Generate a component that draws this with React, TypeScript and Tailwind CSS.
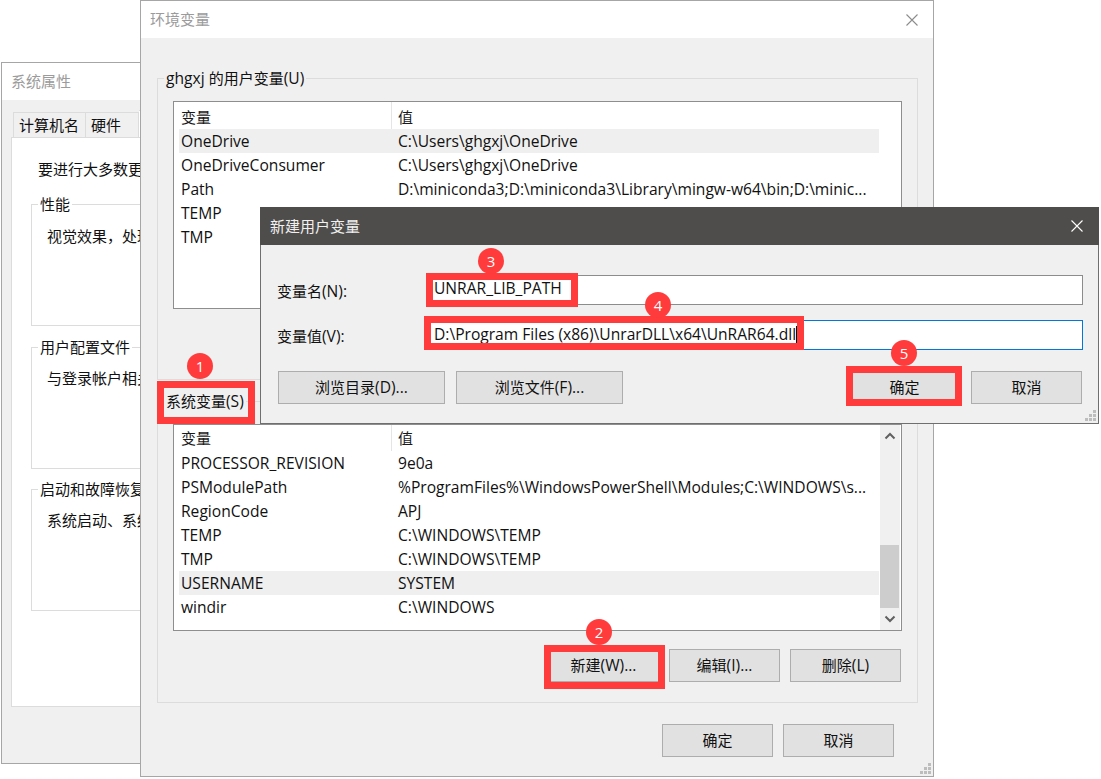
const fontStack = '"Open Sans", "Noto Sans CJK SC", sans-serif';

const userVars = [
  ['OneDrive', 'C:\\Users\\ghgxj\\OneDrive'],
  ['OneDriveConsumer', 'C:\\Users\\ghgxj\\OneDrive'],
  ['Path', 'D:\\miniconda3;D:\\miniconda3\\Library\\mingw-w64\\bin;D:\\minic...'],
  ['TEMP', ''],
  ['TMP', ''],
];

const systemVars = [
  ['PROCESSOR_REVISION', '9e0a'],
  ['PSModulePath', '%ProgramFiles%\\WindowsPowerShell\\Modules;C:\\WINDOWS\\s...'],
  ['RegionCode', 'APJ'],
  ['TEMP', 'C:\\WINDOWS\\TEMP'],
  ['TMP', 'C:\\WINDOWS\\TEMP'],
  ['USERNAME', 'SYSTEM'],
  ['windir', 'C:\\WINDOWS'],
];

// latin runs sit a bit wider than the CJK ones in the screenshot
function Mix({ text }: { text: string }) {
  const parts = text.split(/([\u4e00-\u9fff，、]+)/).filter(Boolean);
  return (
    <>
      {parts.map((p, i) =>
        /[\u4e00-\u9fff，、]/.test(p) ? <span key={i}>{p}</span> : <span key={i} className="text-[15.6px]">{p}</span>
      )}
    </>
  );
}

function WinButton({ label, className }: { label: string; className: string }) {
  return (
    <div className={`flex h-[33px] items-center justify-center border border-[#adadad] bg-[#e1e1e1] text-[15px] text-[#111] ${className}`}>
      <Mix text={label} />
    </div>
  );
}

function Grip() {
  return (
    <svg className="absolute bottom-[1px] right-[1px]" width="12" height="12" viewBox="0 0 12 12" fill="#bdbdbd">
      <rect x="8" y="0" width="3" height="3" />
      <rect x="4" y="4" width="3" height="3" />
      <rect x="8" y="4" width="3" height="3" />
      <rect x="0" y="8" width="3" height="3" />
      <rect x="4" y="8" width="3" height="3" />
      <rect x="8" y="8" width="3" height="3" />
    </svg>
  );
}

function CloseIcon({ stroke }: { stroke: string }) {
  return (
    <svg width="12" height="12" viewBox="0 0 12 12" fill="none" stroke={stroke} strokeWidth="1.1">
      <path d="M0.5 0.5L11.5 11.5M11.5 0.5L0.5 11.5" />
    </svg>
  );
}

function VarList({ rows, hoverRow, scroll, headClass, headText, className }: { rows: string[][]; hoverRow: number; scroll?: boolean; headClass: string; headText: string; className: string }) {
  return (
    <div className={`relative w-[729px] border border-[#8e8e8e] bg-white pl-[5px] ${className}`}>
      <div className={`flex items-center text-[15px] text-[#1a1a1a] ${headClass}`}>
        <div className="flex h-full w-[213px] items-center border-r border-[#e5e5e5] pl-[2px]">
          <span className={headText}>变量</span>
        </div>
        <div className={`pl-[6px] ${headText}`}>值</div>
      </div>
      {rows.map((r, i) => (
        <div key={r[0]} className={`flex h-[24px] w-[700px] items-center pt-[2px] text-[15.6px] text-[#111] ${i === hoverRow ? 'bg-[#efefef]' : ''}`}>
          <div className="w-[219px] pl-[2px]">{r[0]}</div>
          <div className="whitespace-nowrap">{r[1]}</div>
        </div>
      ))}
      {scroll && (
        <div className="absolute bottom-0 right-[1px] top-0 flex w-[20px] flex-col bg-[#f0f0f0]">
          <div className="flex h-[120px] justify-center pt-[7px]">
            <svg width="12" height="8" viewBox="0 0 12 8" fill="none" stroke="#606060" strokeWidth="2">
              <path d="M1.5 6.5L6 2L10.5 6.5" />
            </svg>
          </div>
          <div className="h-[63px] w-[19px] bg-[#cdcdcd]" />
          <div className="flex flex-1 justify-center pt-[7px]">
            <svg width="12" height="8" viewBox="0 0 12 8" fill="none" stroke="#606060" strokeWidth="2">
              <path d="M1.5 1.5L6 6L10.5 1.5" />
            </svg>
          </div>
        </div>
      )}
    </div>
  );
}

function SystemPropsWindow() {
  const groups = [
    { title: '性能', body: '视觉效果，处理', top: 'mt-[23px]', pad: 'pt-[20px]' },
    { title: '用户配置文件', body: '与登录帐户相关', top: 'mt-[21px]', pad: 'pt-[19px]' },
    { title: '启动和故障恢复', body: '系统启动、系统', top: 'mt-[20px]', pad: 'pt-[19px]' },
  ];
  return (
    <div className="absolute left-[1px] top-[62px] h-[702px] w-[300px] border border-[#a6a6a6] bg-[#f0f0f0]">
      <div className="flex h-[37px] items-center bg-white pl-[9px] text-[15px] text-[#9b9b9b]">系统属性</div>
      <div className="mt-[10px] flex h-[27px] items-end pl-[11px] text-[15px] text-[#111]">
        <div className="h-[25px] w-[73px] border border-b-0 border-[#dcdcdc] pl-[5px] leading-[24px]">计算机名</div>
        <div className="h-[25px] w-[53px] border-r border-t border-[#dcdcdc] pl-[5px] leading-[24px]">硬件</div>
        <div className="h-[27px] w-[60px] border-r border-t border-[#dcdcdc] bg-white" />
      </div>
      <div className="ml-[9px] h-[570px] w-[260px] border border-[#dcdcdc] bg-white pl-[26px] pt-[20px] text-[15px] text-[#111]">
        <div className="whitespace-nowrap">要进行大多数更改</div>
        <div className="-ml-[7px]">
          {groups.map((g) => (
            <div key={g.title} className={`relative ${g.top} ${g.pad} h-[122px] w-[220px] border border-[#dcdcdc] pl-[15px]`}>
              <span className="absolute -top-[12px] left-[6px] whitespace-nowrap bg-white px-[2px]">{g.title}</span>
              <div className="whitespace-nowrap">{g.body}</div>
            </div>
          ))}
        </div>
      </div>
    </div>
  );
}

function EnvWindow() {
  return (
    <div className="absolute left-[140px] top-0 h-[777px] w-[794px] border border-[#a6a6a6] bg-[#f0f0f0]">
      <div className="flex h-[37px] items-center justify-between bg-white pl-[9px] pr-[15px] text-[15px] text-[#9b9b9b]">
        <span>环境变量</span>
        <CloseIcon stroke="#8c8c8c" />
      </div>
      <div className="ml-[16px] mt-[40px] w-[761px]">
        <div className="relative h-[302px] border border-[#dcdcdc] pl-[15px] pt-[22px]">
          <span className="absolute -top-[12px] left-[6px] bg-[#f0f0f0] px-[2px] text-[15px] text-[#111]">
            <Mix text="ghgxj 的用户变量(U)" />
          </span>
          <VarList rows={userVars} hoverRow={0} headClass="h-[27px]" headText="pt-[3px]" className="h-[208px]" />
        </div>
        <div className="relative mt-[21px] h-[302px] border border-[#dcdcdc] pl-[15px] pt-[22px]">
          <span className="absolute -top-[12px] left-[6px] bg-[#f0f0f0] px-[2px] text-[15px] text-[#111]">
            <Mix text="系统变量(S)" />
          </span>
          <VarList rows={systemVars} hoverRow={5} scroll headClass="h-[26px]" headText="" className="h-[207px]" />
          <div className="mt-[18px] flex justify-end gap-[10px] pr-[16px]">
            <WinButton label="新建(W)..." className="w-[111px]" />
            <WinButton label="编辑(I)..." className="w-[111px]" />
            <WinButton label="删除(L)" className="w-[111px]" />
          </div>
        </div>
      </div>
      <div className="mt-[21px] flex justify-end gap-[10px] pr-[39px]">
        <WinButton label="确定" className="w-[111px]" />
        <WinButton label="取消" className="w-[111px]" />
      </div>
      <Grip />
    </div>
  );
}

function NewVarDialog() {
  return (
    <div className="absolute left-[260px] top-[207px] h-[217px] w-[839px] border border-t-0 border-[#6f6f6f] bg-[#f0f0f0]">
      <div className="-mx-px flex h-[38px] items-center justify-between bg-[#4f4d4b] pl-[10px] pr-[16px] text-[15px] text-[#f0f0f0]">
        <span>新建用户变量</span>
        <CloseIcon stroke="#ffffff" />
      </div>
      <div className="mt-[30px] flex h-[30px] items-center pl-[16px] pr-[15px] text-[15px] text-[#111]">
        <span className="w-[150px] pt-[3px]"><Mix text="变量名(N):" /></span>
        <div className="h-full flex-1 border border-[#8c8c8c] bg-white pl-[6px] text-[15.6px] leading-[25px]">UNRAR_LIB_PATH</div>
      </div>
      <div className="mt-[15px] flex h-[30px] items-center pl-[16px] pr-[15px] text-[15px] text-[#111]">
        <span className="w-[150px] pt-[3px]"><Mix text="变量值(V):" /></span>
        <div className="flex h-full flex-1 items-center border border-[#0078d7] bg-white pl-[6px] text-[15.6px]">
          <span>D:\Program Files (x86)\UnrarDLL\x64\UnRAR64.dll</span>
          <span className="h-[19px] w-px bg-black" />
        </div>
      </div>
      <div className="mt-[21px] flex pl-[17px] pr-[16px]">
        <WinButton label="浏览目录(D)..." className="w-[167px]" />
        <WinButton label="浏览文件(F)..." className="ml-[11px] w-[167px]" />
        <WinButton label="确定" className="ml-auto w-[111px]" />
        <WinButton label="取消" className="ml-[11px] w-[111px]" />
      </div>
      <Grip />
    </div>
  );
}

const marks = [
  { n: 1, box: 'left-[157px] top-[381px] h-[43px] w-[98px]', dot: 'left-[187px] top-[353px]' },
  { n: 2, box: 'left-[544px] top-[645px] h-[44px] w-[121px]', dot: 'left-[586px] top-[619px]' },
  { n: 3, box: 'left-[426px] top-[273px] h-[34px] w-[152px]', dot: 'left-[478px] top-[248px]' },
  { n: 4, box: 'left-[424px] top-[316px] h-[34px] w-[380px]', dot: 'left-[645px] top-[292px]' },
  { n: 5, box: 'left-[846px] top-[366px] h-[40px] w-[116px]', dot: 'left-[891px] top-[340px]' },
];

export default function App() {
  return (
    <div className="relative h-[779px] w-[1101px] overflow-hidden bg-white" style={{ fontFamily: fontStack }}>
      <SystemPropsWindow />
      <EnvWindow />
      <NewVarDialog />
      {marks.map((m) => (
        <div key={m.n}>
          <div className={`absolute border-[7px] border-[#ff3b3b] ${m.box}`} />
          <div className={`absolute flex h-[26px] w-[26px] items-center justify-center rounded-full bg-[#ff3b3b] text-[15px] text-white ${m.dot}`}>
            {m.n}
          </div>
        </div>
      ))}
    </div>
  );
}
